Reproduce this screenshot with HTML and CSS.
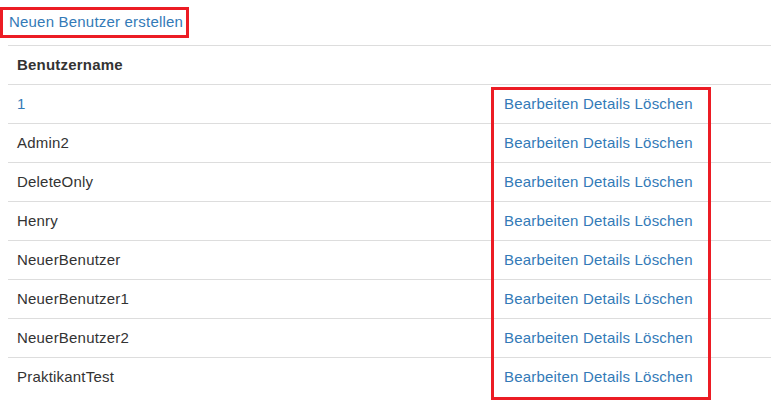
FILE: index.html
```html
<!DOCTYPE html>
<html lang="de">
<head>
<meta charset="utf-8">
<title>Benutzer</title>
<link rel="stylesheet" href="styles.css">
</head>
<body>
<div class="page">
  <p class="create"><a href="#">Neuen Benutzer erstellen</a></p>
  <table class="table">
    <thead>
      <tr><th class="col-name">Benutzername</th><th class="col-actions"></th></tr>
    </thead>
    <tbody>
      <tr><td><a href="#">1</a></td><td><a href="#">Bearbeiten</a> <a href="#">Details</a> <a href="#">Löschen</a></td></tr>
      <tr><td>Admin2</td><td><a href="#">Bearbeiten</a> <a href="#">Details</a> <a href="#">Löschen</a></td></tr>
      <tr><td>DeleteOnly</td><td><a href="#">Bearbeiten</a> <a href="#">Details</a> <a href="#">Löschen</a></td></tr>
      <tr><td>Henry</td><td><a href="#">Bearbeiten</a> <a href="#">Details</a> <a href="#">Löschen</a></td></tr>
      <tr><td>NeuerBenutzer</td><td><a href="#">Bearbeiten</a> <a href="#">Details</a> <a href="#">Löschen</a></td></tr>
      <tr><td>NeuerBenutzer1</td><td><a href="#">Bearbeiten</a> <a href="#">Details</a> <a href="#">Löschen</a></td></tr>
      <tr><td>NeuerBenutzer2</td><td><a href="#">Bearbeiten</a> <a href="#">Details</a> <a href="#">Löschen</a></td></tr>
      <tr><td>PraktikantTest</td><td><a href="#">Bearbeiten</a> <a href="#">Details</a> <a href="#">Löschen</a></td></tr>
    </tbody>
  </table>
  <div class="mark mark-create"></div>
  <div class="mark mark-actions"></div>
</div>
</body>
</html>
```
FILE: styles.css
```css
html, body {
  margin: 0;
  padding: 0;
  background: #fff;
}
body {
  font-family: "Liberation Sans", Arial, sans-serif;
  font-size: 15px;
  letter-spacing: 0.2px;
  line-height: 20px;
  color: #333;
  min-height: 417px;
}
.page {
  position: relative;
  padding-left: 8px;
  min-height: 417px;
}
a {
  color: #337ab7;
  text-decoration: none;
}
.create {
  margin: 0;
  padding-top: 12px;
  padding-bottom: 13px;
  padding-left: 1px;
}
.table {
  width: 763px;
  border-collapse: collapse;
  border-spacing: 0;
}
.table th,
.table td {
  padding: 8px 8px 8px 9px;
  line-height: 22px;
  text-align: left;
  vertical-align: top;
  border-top: 1px solid #ddd;
}
.table th {
  font-weight: bold;
}
.col-name {
  width: 470px;
}
.mark {
  position: absolute;
  border: 3px solid #ec1c24;
  box-sizing: border-box;
  pointer-events: none;
}
.mark-create {
  left: 0;
  top: 7px;
  width: 189px;
  height: 31px;
}
.mark-actions {
  left: 491px;
  top: 87px;
  width: 220px;
  height: 313px;
}
```
